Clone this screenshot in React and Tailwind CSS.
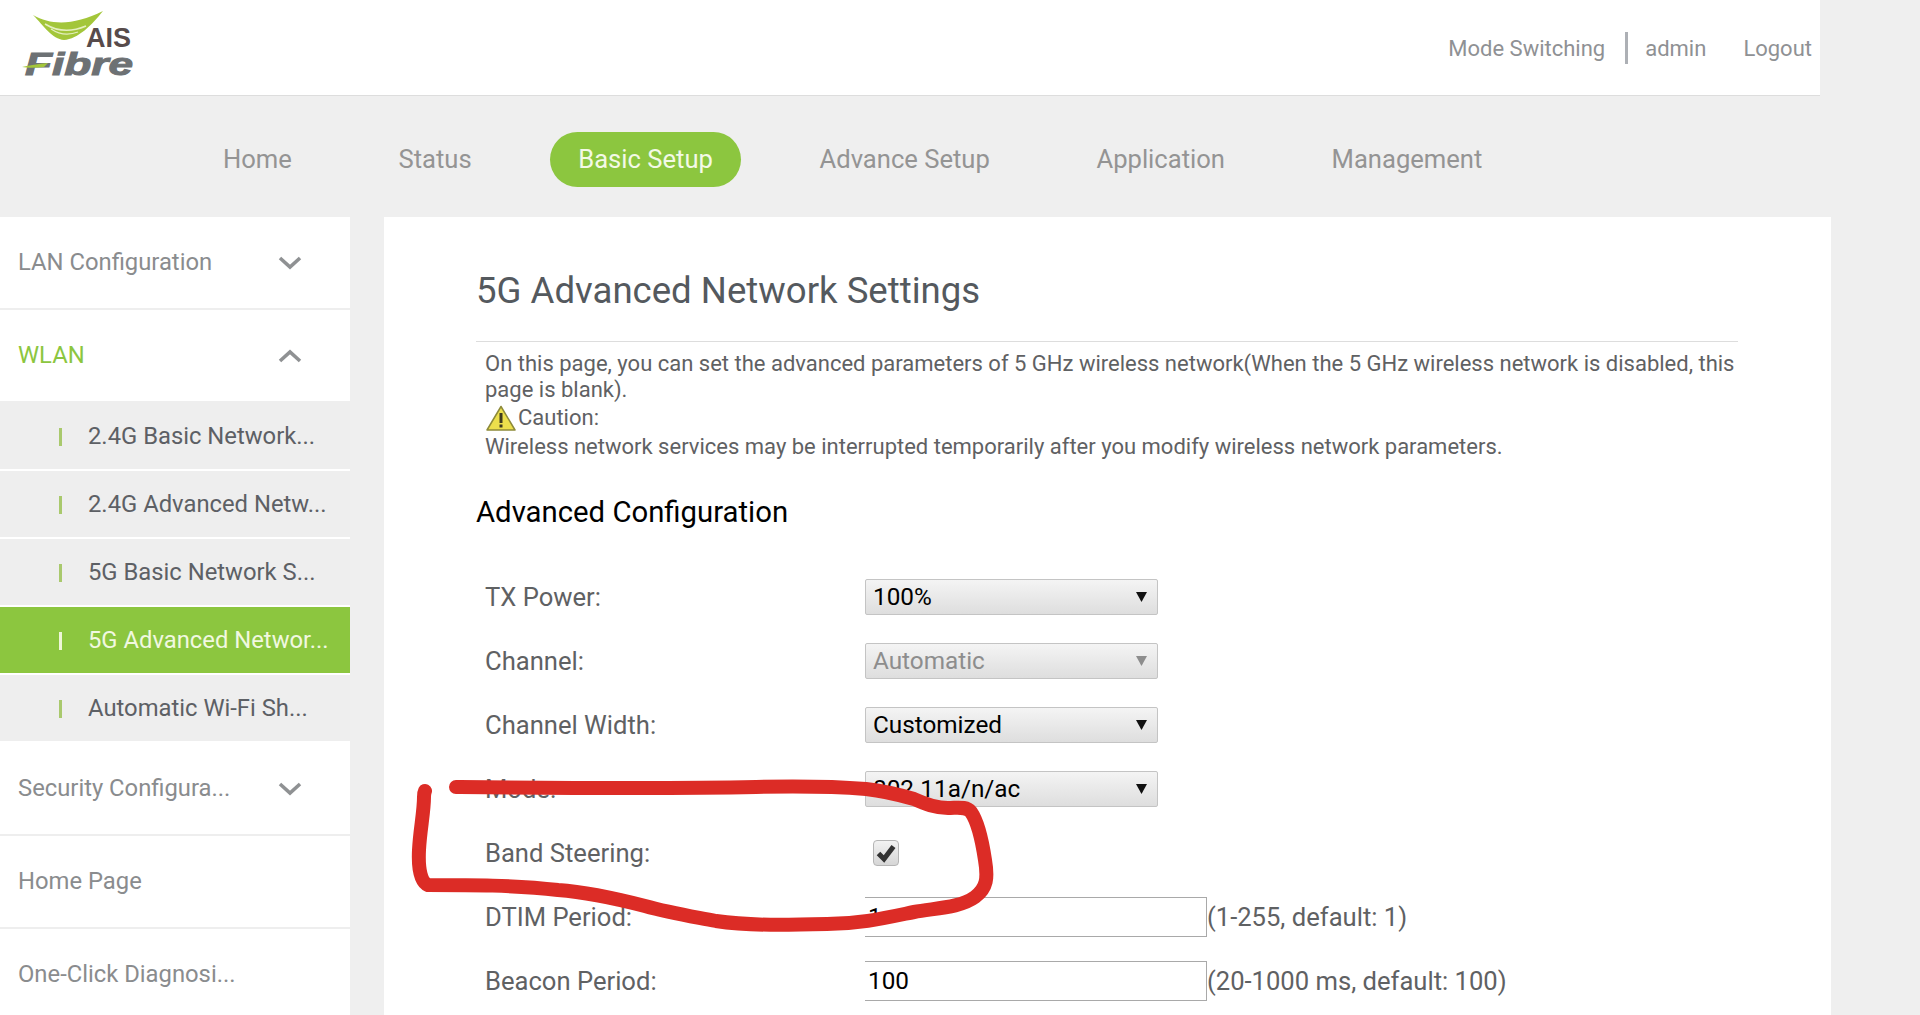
import React from "react";

const tabs = ["Home", "Status", "Basic Setup", "Advance Setup", "Application", "Management"];

function Logo() {
  return (
    <svg width="125" height="72" viewBox="0 0 125 72" className="ml-[20px] mt-[9px] overflow-visible shrink-0">
      <path d="M13 6 C32 17 55 16 83 2 C72 16 58 30 44 31 C32 30 24 17 13 6 Z" fill="#a3c63a" />
      <path d="M25 15 C38 23 52 23 66 17" stroke="#e4efbe" strokeWidth="1.6" fill="none" />
      <path d="M31 20 C40 26 50 26 58 23" stroke="#e4efbe" strokeWidth="1.2" fill="none" />
      <text x="66" y="38" fontFamily="Liberation Sans, sans-serif" fontWeight="700" fontSize="27" fill="#574b4b">AIS</text>
      <text x="5" y="66" fontFamily="Liberation Sans, sans-serif" fontStyle="italic" fontWeight="700" fontSize="31" textLength="108" lengthAdjust="spacingAndGlyphs" fill="#6d7174" stroke="#6d7174" strokeWidth="1">Fibre</text>
      <path d="M2 58 C10 56 18 55 28 54 L24 58 C16 59 8 59 2 58 Z" fill="#a3c63a" />
    </svg>
  );
}

function Chevron({ up }) {
  return (
    <svg width="24" height="14" viewBox="0 0 24 14" className="mr-[-1px]">
      <path d={up ? "M2 12 L12 3 L22 12" : "M2 2 L12 11 L22 2"} fill="none" stroke="#8f9193" strokeWidth="3.6" />
    </svg>
  );
}

function MainRow({ label, icon, green }) {
  return (
    <div className={`h-[93px] bg-white border-b-2 border-[#eeeeee] flex items-center justify-between pl-[18px] pr-[49px] text-[23.8px] shrink-0 ${green ? "text-[#8cc63f]" : "text-[#8a8c8e]"}`}>
      <span>{label}</span>
      {icon === "down" && <Chevron />}
      {icon === "up" && <Chevron up />}
    </div>
  );
}

function SubRow({ label, active }) {
  return (
    <div className={`h-[68px] flex items-center pl-[59px] pt-[2px] text-[23.8px] shrink-0 border-b-2 border-white ${active ? "bg-[#8cc63f] text-[#f1f8e0]" : "bg-[#eeeeee] text-[#5d6065]"}`}>
      <span className={`w-[3px] h-[18px] mr-[26px] ${active ? "bg-[#eef6d8]" : "bg-[#a9c96d]"}`} />
      <span className="whitespace-nowrap">{label}</span>
    </div>
  );
}

function Sidebar() {
  return (
    <aside className="w-[350px] shrink-0 flex flex-col overflow-hidden">
      <MainRow label="LAN Configuration" icon="down" />
      <MainRow label="WLAN" icon="up" green />
      <SubRow label="2.4G Basic Network..." />
      <SubRow label="2.4G Advanced Netw..." />
      <SubRow label="5G Basic Network S..." />
      <SubRow label="5G Advanced Networ..." active />
      <SubRow label="Automatic Wi-Fi Sh..." />
      <MainRow label="Security Configura..." icon="down" />
      <MainRow label="Home Page" />
      <MainRow label="One-Click Diagnosi..." />
    </aside>
  );
}

function Select({ value, disabled }) {
  return (
    <div className={`w-[293px] h-[36px] border border-[#c4c4c4] rounded-[2px] bg-gradient-to-b from-[#f4f4f4] to-[#dedede] flex items-center justify-between pl-[7px] pr-[9px] text-[24.3px] ${disabled ? "text-[#8d8d8d]" : "text-black"}`}>
      <span>{value}</span>
      <svg width="13" height="12" viewBox="0 0 13 12"><path d="M1 1 H12 L6.5 11 Z" fill={disabled ? "#8d8d8d" : "#111"} /></svg>
    </div>
  );
}

function Row({ label, children }) {
  return (
    <div className="h-[64px] flex items-center pl-[9px]">
      <span className="w-[380px] shrink-0 text-[25.6px] text-[#5f6163]">{label}</span>
      {children}
    </div>
  );
}

function InputBox({ value, hint }) {
  return (
    <>
      <div className="w-[342px] h-[40px] border-t border-b border-r border-[#a9a9a9] flex items-center pl-[3px] text-[24.3px] text-black bg-white">{value}</div>
      <span className="text-[25.6px] text-[#5f6163] whitespace-nowrap">{hint}</span>
    </>
  );
}

function Scribble() {
  return (
    <svg className="absolute left-0 top-0 pointer-events-none" width="1920" height="1015" viewBox="0 0 1920 1015">
      <path
        d="M456 787 C560 788 660 789 756 787 C800 786 840 787 866 789 C885 791 900 795 914 799 C925 804 935 808 948 808 C958 808 966 806 971 812 C978 822 982 840 985 860 C988 878 987 888 975 897 C960 908 935 908 914 912 C885 918 860 924 827 924 C790 925 750 926 716 921 C690 916 670 913 645 906 C610 897 585 892 558 890 C515 885 470 885 428 885 C421 882 418 870 419 850 C420 830 424 812 424 797 C424 793 425 791 425 791"
        fill="none"
        stroke="#dc2c26"
        strokeWidth="14"
        strokeLinecap="round"
        strokeLinejoin="round"
      />
    </svg>
  );
}

export default function App() {
  return (
    <div className="relative w-[1920px] h-[1015px] overflow-hidden bg-[#efefef] font-['Roboto',sans-serif]">
      <header className="w-[1820px] h-[96px] bg-white border-b border-[#dddddd] flex justify-between">
        <Logo />
        <div className="flex items-center text-[22px] text-[#8f9194] pr-[8px] pt-[1px]">
          <span>Mode Switching</span>
          <span className="w-[3px] h-[32px] bg-[#adb0b5] ml-[20px] mr-[17px]" />
          <span className="mr-[37px]">admin</span>
          <span>Logout</span>
        </div>
      </header>
      <nav className="h-[121px] flex items-center gap-[50.6px] pl-[195px] pt-[6px] text-[25.6px] text-[#949494]">
        {tabs.map((t) => (
          <span key={t} className={t === "Basic Setup" ? "h-[55px] px-[28px] rounded-full bg-[#8cc63f] text-[#f3f9e6] flex items-center" : "px-[28px]"}>{t}</span>
        ))}
      </nav>
      <div className="flex h-[798px] overflow-hidden">
        <Sidebar />
        <main className="ml-[34px] w-[1447px] bg-white pl-[92px] pr-[93px] overflow-hidden">
          <h1 className="pt-[50px] pb-[26px] text-[36.6px] leading-[48px] text-[#54595e] border-b border-[#dddddd]">5G Advanced Network Settings</h1>
          <div className="pl-[9px] pt-[9px] text-[22px] leading-[26px] text-[#5f6163]">
            <p>On this page, you can set the advanced parameters of 5 GHz wireless network(When the 5 GHz wireless network is disabled, this page is blank).</p>
            <p className="flex items-center h-[30px]">
              <svg width="30" height="26" viewBox="0 0 30 26" className="ml-[1px] mr-[2px]">
                <path d="M15 1.5 L29 25 H1 Z" fill="#ecdf4c" stroke="#8d8a3a" strokeWidth="1.5" strokeLinejoin="round" />
                <rect x="13.5" y="8" width="3" height="10" fill="#3d3a20" />
                <rect x="13.5" y="19.5" width="3" height="3" fill="#3d3a20" />
              </svg>
              Caution:
            </p>
            <p className="mt-[1px]">Wireless network services may be interrupted temporarily after you modify wireless network parameters.</p>
          </div>
          <h2 className="mt-[34px] mb-[35px] text-[29.3px] leading-[36px] text-black">Advanced Configuration</h2>
          <Row label="TX Power:"><Select value="100%" /></Row>
          <Row label="Channel:"><Select value="Automatic" disabled /></Row>
          <Row label="Channel Width:"><Select value="Customized" /></Row>
          <Row label="Mode:"><Select value="802.11a/n/ac" /></Row>
          <Row label="Band Steering:">
            <div className="ml-[8px] w-[26px] h-[26px] rounded-[4px] border border-[#b5b5b5] bg-gradient-to-b from-[#f2f2f2] to-[#d6d6d6] flex items-center justify-center">
              <svg width="20" height="20" viewBox="0 0 20 20"><path d="M2.5 10.5 L8 16 L17.5 3.5" fill="none" stroke="#333333" strokeWidth="5" /></svg>
            </div>
          </Row>
          <Row label="DTIM Period:"><InputBox value="1" hint="(1-255, default: 1)" /></Row>
          <Row label="Beacon Period:"><InputBox value="100" hint="(20-1000 ms, default: 100)" /></Row>
        </main>
      </div>
      <Scribble />
    </div>
  );
}
